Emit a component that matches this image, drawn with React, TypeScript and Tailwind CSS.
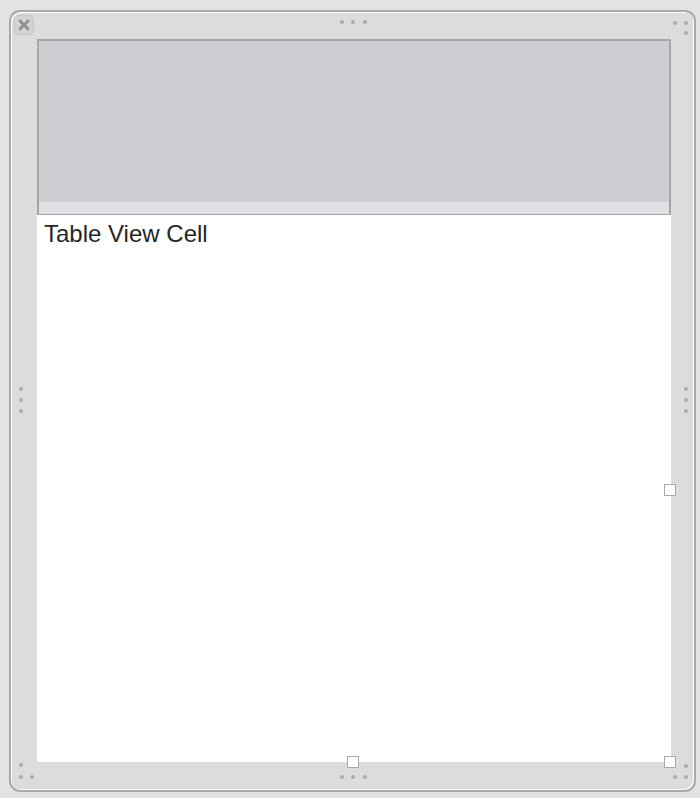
import React from "react";

const dots: [number, number][] = [
  // top center
  [331, 10], [342, 10], [354, 10],
  // top right
  [664, 11], [675, 11], [675, 21],
  // left middle
  [10, 377], [10, 388], [10, 399],
  // right middle
  [675, 377], [675, 388], [675, 399],
  // bottom left
  [10, 753], [10, 765], [21, 765],
  // bottom center
  [331, 765], [342, 765], [354, 765],
  // bottom right
  [675, 754], [664, 765], [675, 765],
];

const handles: [number, number][] = [
  [653, 472],
  [336, 744],
  [653, 744],
];

export default function App() {
  return (
    <div
      className="w-[700px] h-[798px] bg-[#e3e3e6] pl-[9px] pt-[10px] overflow-hidden"
      style={{ fontFamily: '"Liberation Sans", Arial, sans-serif' }}
    >
      <div className="relative w-[687px] h-[782px] rounded-[11px] border-2 border-[#a9a9ac] bg-[#dcdcde] pl-[26px] pt-[27px] shadow-[inset_1px_1px_0_#ffffff,inset_-1px_-1px_0_#ffffff]">
        {/* close button */}
        <div className="absolute left-[3px] top-[3px] w-[20px] h-[20px] rounded-[5px] bg-[#d2d2d4] border border-[#c6c6c8] flex items-center justify-center">
          <svg width="12" height="12" viewBox="0 0 12 12">
            <path d="M2 2 L10 10 M10 2 L2 10" stroke="#8d8d90" strokeWidth="2.8" strokeLinecap="round" />
          </svg>
        </div>

        {dots.map(([x, y], i) => (
          <div
            key={i}
            className="absolute w-[4px] h-[4px] rounded-full bg-[#aaaaad] blur-[0.5px]"
            style={{ left: x - 2, top: y - 2 }}
          />
        ))}

        <div className="w-[634px] h-[723px] bg-white flex flex-col">
          <div className="h-[176px] border-l-2 border-t-2 border-r-2 border-b border-[#a5a6a8] flex flex-col">
            <div className="flex-1 bg-[#cdced2]" />
            <div className="h-[12px] bg-[#dfe0e4]" />
          </div>
          <div className="pl-[7px] pt-[4px] text-[24px] leading-[30px] text-[#262626]">
            Table View Cell
          </div>
        </div>

        {handles.map(([x, y], i) => (
          <div
            key={i}
            className="absolute w-[12px] h-[12px] bg-white border border-[#a9a9ab]"
            style={{ left: x, top: y }}
          />
        ))}
      </div>
    </div>
  );
}
